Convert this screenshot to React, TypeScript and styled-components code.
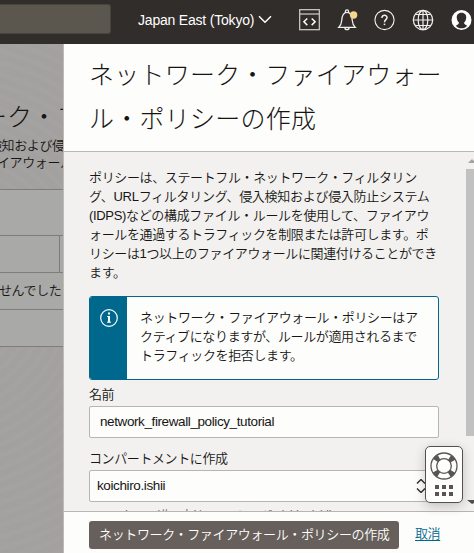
import React from "react";
import styled, { createGlobalStyle } from "styled-components";

const GlobalStyle = createGlobalStyle`
  * { box-sizing: border-box; }
  body {
    margin: 0;
    overflow: hidden;
    color: #161513;
    font-family: "Liberation Sans", "Noto Sans CJK JP", sans-serif;
    font-size: 13px;
    font-weight: 350;
  }
`;

const Page = styled.div`
  position: relative;
  display: flex;
  flex-direction: column;
  width: 474px;
  height: 553px;
  overflow: hidden;
`;

const TopBar = styled.header`
  display: flex;
  align-items: flex-start;
  flex: none;
  height: 44px;
  background: #312d2a;
  color: #fff;
`;

const SearchField = styled.div`
  width: 111px;
  height: 30px;
  margin-top: 4px;
  margin-right: 27px;
  border: 1px solid #47433d;
  border-left: 0;
  border-radius: 0 3px 3px 0;
  background: #5b564e;
`;

const Region = styled.div`
  display: flex;
  align-items: center;
  width: 161px;
  height: 39px;
  font-size: 14px;
  white-space: nowrap;
  svg { margin-left: 5px; }
`;

const RegionName = styled.span`
  width: 115px;
  letter-spacing: -0.2px;
`;

const Icons = styled.nav`
  display: flex;
  align-items: center;
  height: 40px;
  gap: 16.7px;
  svg { display: block; flex: none; }
`;

const Main = styled.main`
  display: flex;
  flex: 1;
  min-height: 0;
`;

const Backdrop = styled.aside`
  width: 64px;
  flex: none;
  overflow: hidden;
  border-right: 1px solid #bebbb7;
  background: repeating-radial-gradient(circle at -60px 250px, #a3a19f 0 5px, #a5a3a1 7px 9px, #a3a19f 11px);
  white-space: nowrap;
`;

const BackHeading = styled.div`
  margin: 48px 0 0 -18px;
  height: 44px;
  line-height: 51px;
  font-size: 25px;
  font-weight: 300;
`;

const BackText = styled.div<{ $shift: number }>`
  height: 17px;
  line-height: 19px;
  margin-left: ${(p) => p.$shift}px;
  letter-spacing: -0.4px;
`;

const BackRow = styled.div<{ $height: number }>`
  height: ${(p) => p.$height}px;
  border-top: 1px solid #7e7d7b;
  background: #a9a9a7;
  ${BackText} { margin-top: 8px; }
`;

const BackTable = styled.div`
  margin-top: 19px;
  border-bottom: 1px solid #7e7d7b;
`;

const BackCell = styled.div`
  width: 60px;
  height: 100%;
  border-right: 1px solid #7e7d7b;
`;

const Panel = styled.section`
  display: flex;
  flex-direction: column;
  flex: 1;
  min-width: 0;
  background: #f2f1ef;
`;

const Title = styled.h1`
  height: 108px;
  flex: none;
  margin: 0;
  padding: 9px 0 0 25px;
  border-bottom: 1px solid #b9b8ae;
  background: #fdfdfc;
  font-size: 25px;
  font-weight: 300;
  line-height: 44px;
  white-space: nowrap;
`;

const Line = styled.span<{ $spacing?: number }>`
  display: block;
  white-space: nowrap;
  letter-spacing: ${(p) => p.$spacing ?? -0.37}px;
`;

const Scroller = styled.div`
  display: flex;
  flex: 1;
  min-height: 0;
  overflow: hidden;
`;

const Form = styled.div`
  width: 377px;
  height: 100%;
  padding: 16px 2px 0 25px;
  overflow: hidden;
  flex: none;
`;

const Description = styled.p`
  margin: 0;
  height: 128px;
  line-height: 19px;
`;

const Notice = styled.div`
  display: flex;
  height: 84px;
  border: 1px solid #00688c;
  border-radius: 3px;
  background: #fdfdfc;
  overflow: hidden;
`;

const NoticeMark = styled.div`
  width: 37px;
  flex: none;
  padding: 12px 0 0 10px;
  background: #00688c;
  svg { display: block; }
`;

const NoticeText = styled.div`
  padding: 11px 0 0 13px;
  line-height: 19px;
`;

const Label = styled.label<{ $height: number }>`
  display: flex;
  align-items: flex-end;
  height: ${(p) => p.$height}px;
  padding-bottom: 2px;
  line-height: 19px;
  letter-spacing: -0.4px;
`;

const Field = styled.div<{ $inset: number }>`
  display: flex;
  align-items: center;
  justify-content: space-between;
  height: 32px;
  padding: 0 12px 2px ${(p) => p.$inset}px;
  border: 1px solid #b8b4b0;
  border-radius: 2px;
  background: #fdfdfc;
  font-size: 13.5px;
  white-space: nowrap;
  svg { position: relative; top: 1px; }
`;

const Hint = styled.div`
  margin: 5px 0 0 8px;
  font-size: 11.5px;
  line-height: 14px;
  letter-spacing: -0.1px;
  color: #66625f;
  white-space: nowrap;
`;

const Track = styled.div`
  display: flex;
  flex-direction: column;
  align-items: center;
  width: 8px;
  margin-left: 25px;
  svg { display: block; flex: none; }
`;

const Thumb = styled.div`
  width: 8px;
  height: 267px;
  margin: 4px 0 62px;
  flex: none;
  background: #c1c1c1;
`;

const Footer = styled.footer`
  display: flex;
  align-items: flex-start;
  flex: none;
  height: 42px;
  padding: 9px 0 0 25px;
  border-top: 1px solid #b9b6b1;
  background: #fdfdfc;
`;

const Primary = styled.button`
  width: 310px;
  height: 28px;
  padding: 0 0 3px 10px;
  border: 0;
  border-radius: 3px;
  background: #665f5b;
  color: #fff;
  text-align: left;
  font: inherit;
  letter-spacing: -0.36px;
  white-space: nowrap;
  margin-right: 16px;
`;

const Cancel = styled.a`
  height: 20px;
  margin-top: 3px;
  line-height: 19px;
  color: #00688c;
  letter-spacing: -0.4px;
  text-decoration: underline;
  text-underline-offset: 2px;
`;

const Support = styled.div`
  position: absolute;
  left: 425px;
  top: 446px;
  display: flex;
  flex-direction: column;
  align-items: center;
  width: 38px;
  height: 57px;
  padding-top: 5px;
  border: 1px solid #55504c;
  border-radius: 5px;
  background: #fdfdfc;
  box-shadow: 0 3px 12px rgba(0, 0, 0, 0.2);
`;

const Dots = styled.div`
  display: grid;
  grid-template-columns: repeat(3, 4px);
  gap: 3px;
  margin-top: 5px;
`;

const Dot = styled.i`
  width: 4px;
  height: 4px;
  background: #5a5550;
`;

const CodeIcon = () => (
  <svg width="21" height="22" viewBox="0 0 21 22" fill="none" stroke="#d4d2ce" strokeWidth="1.2">
    <rect x=".7" y=".7" width="19.6" height="20" />
    <path d="M1 5h19" />
    <path d="M8.3 9.5l-3.4 3.3 3.4 3.3M12.7 9.5l3.4 3.3-3.4 3.3" stroke="#fff" strokeWidth="1.5" />
  </svg>
);

const BellIcon = () => (
  <svg width="21" height="22" viewBox="0 0 21 22" fill="none" stroke="#f2f1ef" strokeWidth="1.2">
    <path d="M1.700 18.400c2-1.800 2.800-3.600 3-6.800C5 6 6.400 3.300 10 3.300s5 2.700 5.300 8.300c.2 3.200 1 5 3 6.800z" />
    <path d="M8.400 3.500V2.300c0-2 3.200-2 3.200 0v1.200M7.800 18.600c.2 2.700 4.200 2.700 4.400 0" />
    <circle cx="16.600" cy="6" r="3.700" fill="#f6d58d" stroke="none" />
  </svg>
);

const HelpIcon = () => (
  <svg width="21" height="22" viewBox="0 0 21 22" fill="none" stroke="#f2f1ef" strokeWidth="1.1">
    <circle cx="10.500" cy="11" r="9.600" />
    <path d="M7.900 8.900C8 5.300 13.300 5.700 13 8.800c-.1 1.900-2.500 1.900-2.500 4.400" strokeWidth="1.500" />
    <path d="M10.500 14.600v1.500" strokeWidth="1.600" />
  </svg>
);

const GlobeIcon = () => (
  <svg width="22" height="22" viewBox="0 0 22 22" fill="none" stroke="#f2f1ef" strokeWidth="1.2">
    <circle cx="11" cy="11" r="9.700" />
    <ellipse cx="11" cy="11" rx="4.800" ry="9.700" />
    <path d="M11 1.300v19.400M1.300 11h19.400M3.200 5.500h15.600M3.200 16.500h15.600" />
  </svg>
);

const UserIcon = () => (
  <svg width="21" height="22" viewBox="0 0 21 22">
    <circle cx="10.500" cy="11" r="10" fill="#fff" />
    <path d="M10.500 3.800c-3.400 0-5 2.300-4.700 5.200.2 2.300 1 3.700 2.100 4.600.2 1.200-.4 1.700-3 3.100 2.600 3.500 8.600 3.500 11.200 0-2.600-1.400-3.200-1.900-3-3.100 1.100-.9 1.900-2.300 2.100-4.600.3-2.900-1.300-5.200-4.700-5.200z" fill="#312d2a" />
  </svg>
);

const InfoIcon = () => (
  <svg width="18" height="18" viewBox="0 0 18 18" fill="none" stroke="#fff">
    <circle cx="9" cy="9" r="8.300" strokeWidth="1.200" />
    <path d="M9 3.400v2M9 7v6.200" strokeWidth="2" />
    <path d="M7.200 7.500H9M7 13.200h4" strokeWidth="1" />
  </svg>
);

const LifeRing = () => (
  <svg width="28" height="28" viewBox="0 0 28 28" fill="none" stroke="#5a5550">
    <circle cx="14" cy="14" r="10.100" strokeWidth="5.600" strokeDasharray="4.800 11.065" strokeDashoffset="-5.530" />
    <circle cx="14" cy="14" r="13" strokeWidth="1.300" />
    <circle cx="14" cy="14" r="7.300" strokeWidth="1.300" />
  </svg>
);

export default function App() {
  return (
    <Page>
      <GlobalStyle />
      <TopBar>
        <SearchField />
        <Region>
          <RegionName>Japan East (Tokyo)</RegionName>
          <svg width="14" height="9" viewBox="0 0 14 9" fill="none" stroke="#fff" strokeWidth="1.5">
            <path d="M1 1.300l6 6 6-6" />
          </svg>
        </Region>
        <Icons>
          <CodeIcon />
          <BellIcon />
          <HelpIcon />
          <GlobeIcon />
          <UserIcon />
        </Icons>
      </TopBar>
      <Main>
        <Backdrop>
          <BackHeading>ーク・フ</BackHeading>
          <BackText $shift={-11}>検知および侵</BackText>
          <BackText $shift={-3}>イアウォール</BackText>
          <BackTable>
            <BackRow $height={46} />
            <BackRow $height={37}>
              <BackCell />
            </BackRow>
            <BackRow $height={37}>
              <BackText $shift={-1}>せんでした</BackText>
            </BackRow>
            <BackRow $height={37} />
          </BackTable>
        </Backdrop>
        <Panel>
          <Title>
            <Line $spacing={0.24}>ネットワーク・ファイアウォー</Line>
            <Line $spacing={0.24}>ル・ポリシーの作成</Line>
          </Title>
          <Scroller>
            <Form>
              <Description>
                <Line>ポリシーは、ステートフル・ネットワーク・フィルタリン</Line>
                <Line $spacing={-0.29}>グ、URLフィルタリング、侵入検知および侵入防止システム</Line>
                <Line $spacing={-0.33}>(IDPS)などの構成ファイル・ルールを使用して、ファイアウ</Line>
                <Line>ォールを通過するトラフィックを制限または許可します。ポ</Line>
                <Line>リシーは1つ以上のファイアウォールに関連付けることができ</Line>
                <Line>ます。</Line>
              </Description>
              <Notice>
                <NoticeMark>
                  <InfoIcon />
                </NoticeMark>
                <NoticeText>
                  <Line>ネットワーク・ファイアウォール・ポリシーはア</Line>
                  <Line>クティブになりますが、ルールが適用されるまで</Line>
                  <Line>トラフィックを拒否します。</Line>
                </NoticeText>
              </Notice>
              <Label $height={26}>名前</Label>
              <Field $inset={10}>
                <Line $spacing={-0.4}>network_firewall_policy_tutorial</Line>
              </Field>
              <Label $height={32}>コンパートメントに作成</Label>
              <Field $inset={7}>
                <Line $spacing={-0.38}>koichiro.ishii</Line>
                <svg width="10" height="14" viewBox="0 0 10 14" fill="none" stroke="#302c29" strokeWidth="1.400">
                  <path d="M1 4.500l4-4 4 4M1 9.500l4 4 4-4" />
                </svg>
              </Field>
              <Hint>
                orasejapan (ルート)/compartment/koichiro.ishii
              </Hint>
            </Form>
            <Track>
              <svg width="8" height="13" viewBox="0 0 8 13">
                <path d="M2 11l4-4 2 2v2z" fill="#a3a3a3" />
              </svg>
              <Thumb />
              <svg width="8" height="8" viewBox="0 0 8 8">
                <path d="M1 2h7v3L6 6z" fill="#505050" />
              </svg>
            </Track>
          </Scroller>
          <Footer>
            <Primary>ネットワーク・ファイアウォール・ポリシーの作成</Primary>
            <Cancel>取消</Cancel>
          </Footer>
        </Panel>
      </Main>
      <Support>
        <LifeRing />
        <Dots>
          <Dot />
          <Dot />
          <Dot />
          <Dot />
          <Dot />
          <Dot />
        </Dots>
      </Support>
    </Page>
  );
}
